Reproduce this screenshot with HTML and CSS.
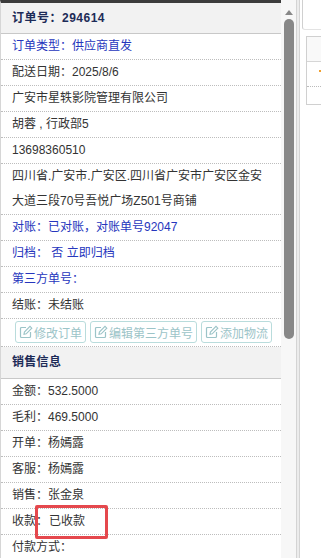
FILE: index.html
```html
<!DOCTYPE html>
<html>
<head>
<meta charset="utf-8">
<link rel="stylesheet" href="styles.css">
</head>
<body>
<div class="app">
  <div class="panel">
    <div class="head">订单号：294614</div>
    <div class="row blue">订单类型：供应商直发</div>
    <div class="row">配送日期：2025/8/6</div>
    <div class="row">广安市星轶影院管理有限公司</div>
    <div class="row">胡蓉 , 行政部5</div>
    <div class="row">13698360510</div>
    <div class="row">四川省.广安市.广安区.四川省广安市广安区金安<br>大道三段70号吾悦广场Z501号商铺</div>
    <div class="row blue">对账：已对账，对账单号92047</div>
    <div class="row blue">归档： 否 立即归档</div>
    <div class="row blue">第三方单号：</div>
    <div class="row">结账：未结账</div>
    <div class="row btns">
      <span class="btn"><svg class="ic" viewBox="0 0 14 14"><path d="M7 2.5H2.5a1 1 0 0 0-1 1v8a1 1 0 0 0 1 1h8a1 1 0 0 0 1-1V7" fill="none" stroke="currentColor" stroke-width="1.2"/><path d="M5 9.2l.4-2.2 5.6-5.6 1.8 1.8-5.6 5.6z" fill="none" stroke="currentColor" stroke-width="1.1"/></svg>修改订单</span>
      <span class="btn"><svg class="ic" viewBox="0 0 14 14"><path d="M7 2.5H2.5a1 1 0 0 0-1 1v8a1 1 0 0 0 1 1h8a1 1 0 0 0 1-1V7" fill="none" stroke="currentColor" stroke-width="1.2"/><path d="M5 9.2l.4-2.2 5.6-5.6 1.8 1.8-5.6 5.6z" fill="none" stroke="currentColor" stroke-width="1.1"/></svg>编辑第三方单号</span>
      <span class="btn"><svg class="ic" viewBox="0 0 14 14"><path d="M7 2.5H2.5a1 1 0 0 0-1 1v8a1 1 0 0 0 1 1h8a1 1 0 0 0 1-1V7" fill="none" stroke="currentColor" stroke-width="1.2"/><path d="M5 9.2l.4-2.2 5.6-5.6 1.8 1.8-5.6 5.6z" fill="none" stroke="currentColor" stroke-width="1.1"/></svg>添加物流</span>
    </div>
    <div class="head sec">销售信息</div>
    <div class="row">金额：532.5000</div>
    <div class="row">毛利：469.5000</div>
    <div class="row">开单：杨嫣露</div>
    <div class="row">客服：杨嫣露</div>
    <div class="row">销售：张金泉</div>
    <div class="row mark">收款：<span class="paid">已收款</span><span class="redbox"></span></div>
    <div class="row last">付款方式：</div>
  </div>
  <div class="track">
    <div class="arrow"></div>
    <div class="thumb"></div>
  </div>
  <div class="gutter"></div>
  <div class="side">
    <div class="tab"></div>
    <div class="box">
      <div class="box-top"></div>
      <div class="box-mid"><span class="dot"></span></div>
      <div class="box-bot"></div>
    </div>
  </div>
</div>
</body>
</html>
```
FILE: styles.css
```css
* { box-sizing: border-box; }
html, body { margin: 0; padding: 0; }
body {
  width: 321px;
  height: 558px;
  overflow: hidden;
  background: #fff;
  font-family: "Liberation Sans", "Noto Sans CJK SC", sans-serif;
  font-size: 12px;
  color: #333;
}
.app {
  display: flex;
  height: 558px;
}
.panel {
  width: 281px;
  flex: none;
  border-left: 1px solid #d6d6d6;
  border-top: 3px solid #3c3c3c;
}
.head {
  height: 31px;
  line-height: 30px;
  padding-left: 11px;
  background: #f2f2f2;
  border-bottom: 1px solid #c8c8c8;
  font-weight: bold;
  color: #1d2b57;
  letter-spacing: 0.5px;
}
.head.sec {
  height: 32px;
  line-height: 31px;
  letter-spacing: 0.3px;
}
.row {
  line-height: 25px;
  padding-left: 11px;
  border-bottom: 1px dotted #bdbdbd;
  white-space: nowrap;
}
.row.last { border-bottom: none; }
.blue { color: #2636bd; }
.mark { position: relative; }
.paid { margin-left: 1px; }
.redbox {
  position: absolute;
  left: 34px;
  top: -4px;
  width: 73px;
  height: 34px;
  border: 3px solid #e5484d;
  border-radius: 2px;
}
.btns {
  display: flex;
  gap: 4px;
  padding-left: 14px;
  padding-top: 2px;
  height: 28px;
  line-height: normal;
}
.btn {
  display: inline-flex;
  align-items: center;
  height: 22px;
  padding: 0 3px 0 3px;
  border: 1px solid #b9dcdc;
  border-radius: 3px;
  color: #9cc4c8;
  font-size: 12px;
  gap: 1px;
}
.ic { width: 14px; height: 14px; }
.track {
  width: 15px;
  flex: none;
  background: #f7f7f7;
  display: flex;
  flex-direction: column;
  align-items: center;
  padding-left: 1px;
}
.arrow {
  margin-top: 10px;
  width: 0; height: 0;
  border-left: 4px solid transparent;
  border-right: 4px solid transparent;
  border-bottom: 5px solid #888;
}
.thumb {
  margin-top: 4px;
  width: 10px;
  height: 320px;
  background: #888;
  border-radius: 5px;
}
.gutter {
  width: 4px;
  flex: none;
  background: #ececec;
  border-left: 1px solid #d4d4d4;
  border-right: 1px solid #d4d4d4;
}
.side {
  flex: 1;
  background: #fff;
}
.tab {
  margin-left: 2px;
  height: 30px;
  border-left: 1px solid #d0d0d0;
  border-bottom: 1px solid #e3e3e3;
  border-bottom-left-radius: 3px;
}
.box {
  margin-top: 6px;
  margin-left: 6px;
  height: 69px;
  border: 1px solid #d0d0d0;
  border-right: none;
}
.box-top {
  height: 25px;
  background: #f9f9f9;
  border-bottom: 1px solid #d6d6d6;
}
.box-mid {
  height: 25px;
  border-bottom: 1px dotted #bbb;
  position: relative;
}
.dot {
  position: absolute;
  right: 0;
  top: 8px;
  width: 2px;
  height: 2px;
  background: #f0a030;
}
```
